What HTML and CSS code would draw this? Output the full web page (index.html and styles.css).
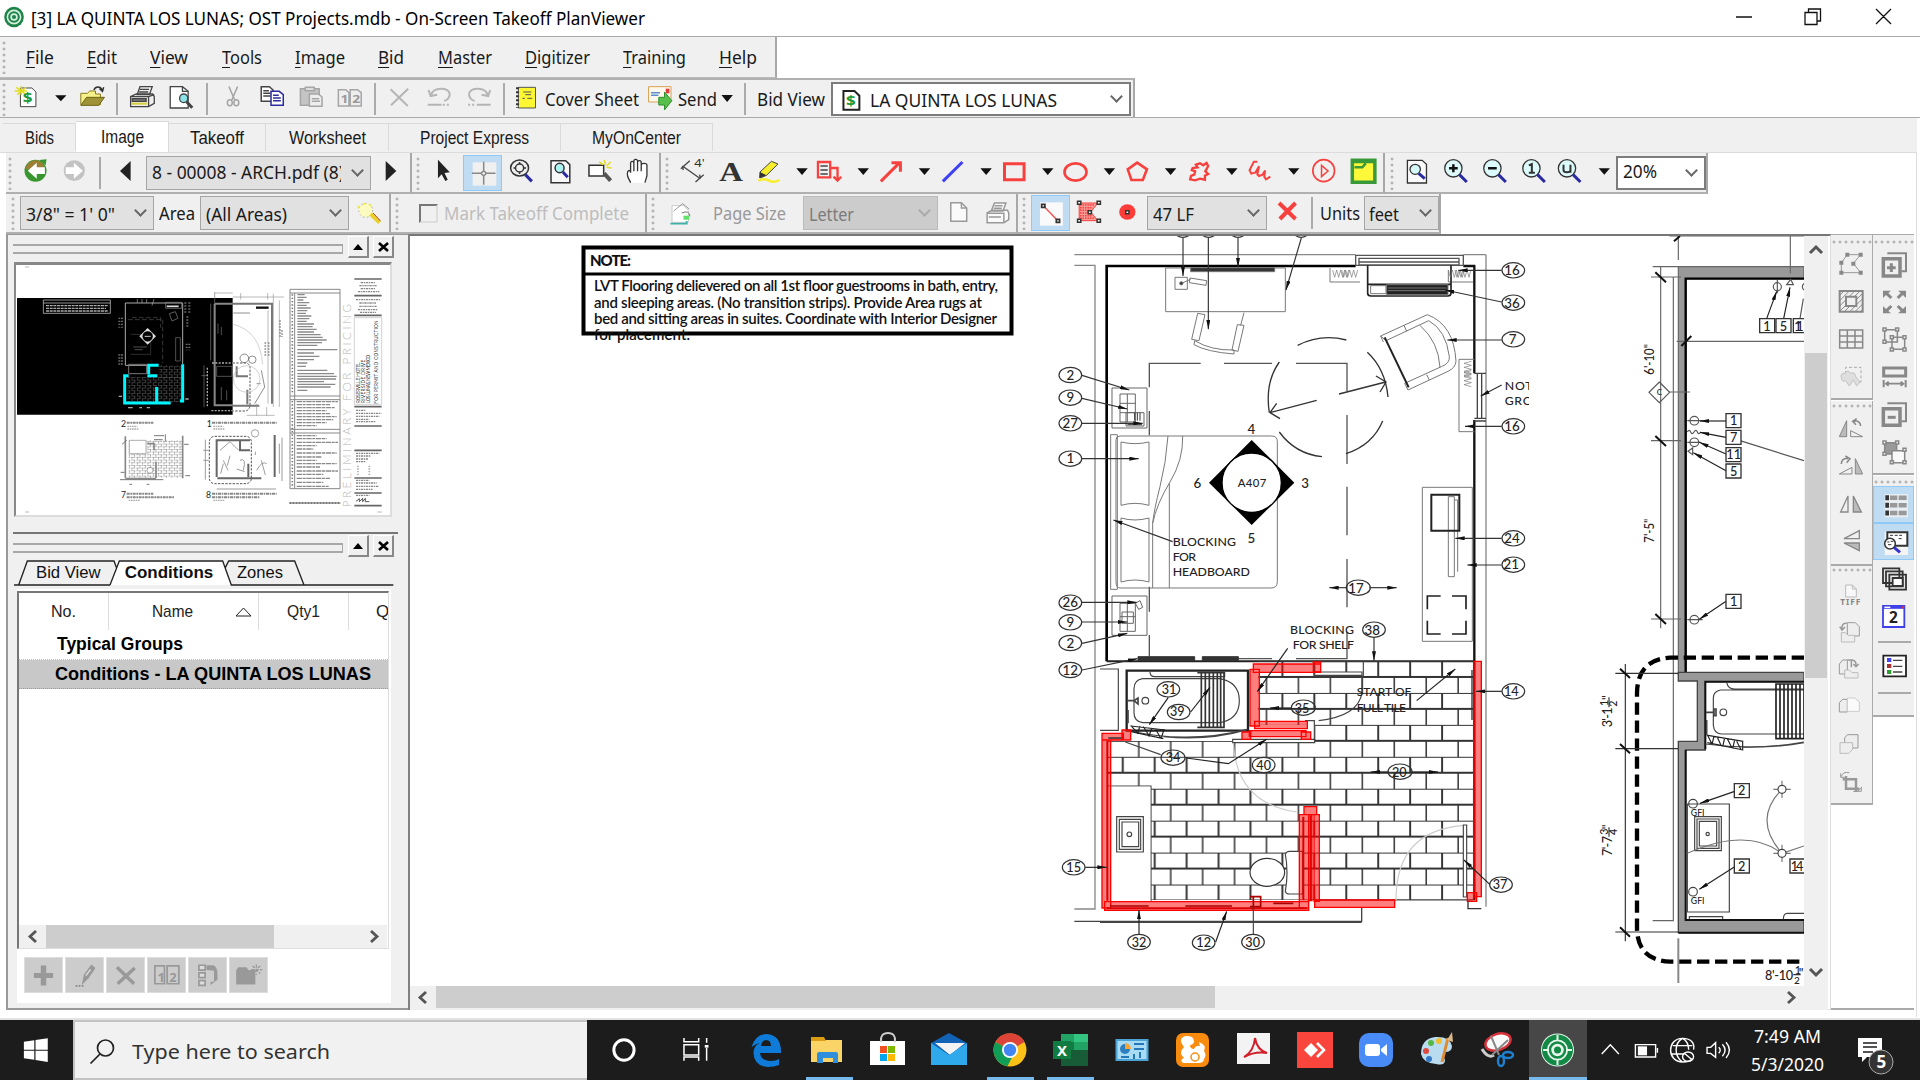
FILE: index.html
```html
<!DOCTYPE html>
<html lang="en">
<head>
<meta charset="utf-8">
<title>On-Screen Takeoff PlanViewer</title>
<link rel="stylesheet" href="styles.css">
</head>
<body>
<div class="app">

<header class="title">
  <svg width="30" height="36" viewBox="0 0 30 36"><ellipse cx="14" cy="17" rx="9.8" ry="10.3" fill="#1d8348"/><circle cx="14" cy="17" r="6.6" fill="none" stroke="#d5f0df" stroke-width="1.6"/><circle cx="14" cy="17" r="2.9" fill="none" stroke="#d5f0df" stroke-width="1.7"/></svg>
  <span class="fit ttl" data-w="614">[3] LA QUINTA LOS LUNAS; OST Projects.mdb - On-Screen Takeoff PlanViewer</span>
  <svg class="winbtns" width="180" height="36" viewBox="1726 0 180 36"><path d="M1736 17h16M1805 12.500h12v12h-12zM1808.500 12v-3h12v12h-3.500M1876 9l15 15M1891 9l-15 15" fill="none" stroke="#111" stroke-width="1.300"/></svg>
</header>

<nav class="menurow"><div class="band menus">
  <i class="grip"></i>
  <span class="fit" data-w="28"><u>F</u>ile</span><span class="fit" data-w="30"><u>E</u>dit</span><span class="fit" data-w="38"><u>V</u>iew</span><span class="fit" data-w="40"><u>T</u>ools</span><span class="fit" data-w="50"><u>I</u>mage</span><span class="fit" data-w="26"><u>B</u>id</span><span class="fit" data-w="54"><u>M</u>aster</span><span class="fit" data-w="65"><u>D</u>igitizer</span><span class="fit" data-w="63"><u>T</u>raining</span><span class="fit" data-w="38"><u>H</u>elp</span>
</div></nav>

<div class="filerow"><div class="band">
  <i class="grip"></i>
  <svg class="k1" width="62" height="39" viewBox="8 79 62 39"><g><path d="M50 264h28l10 12v44H50z" fill="#fff" stroke="#444"/><path d="M52 258v28M40 262l24 22M64 262l-22 22M36 273h30" stroke="#e3dc20" stroke-width="1.500"/><text x="56" y="310" font-size="42" font-weight="700" fill="#1c9a3a">$</text><path d="M135 286h28l-14 18z" fill="#111"/></g></svg>
  <svg class="k1" width="46" height="39" viewBox="70 79 46 39"><g><path d="M198 314V280h16l6-7h14v9h12v32z" fill="#f7f08a" stroke="#8a7d18"/><path d="M198 316l14-24h44l-14 24z" fill="#a09236" stroke="#6d6415"/><path d="M230 270c4-12 16-12 20 0m-6-4l7 8 3-12" fill="none" stroke="#333" stroke-width="1.500"/></g></svg>
  <i class="sep"></i>
  <svg class="k1" width="88" height="39" viewBox="118 79 88 39"><g fill="#eee" stroke="#444" stroke-width="1.300"><path d="M336 284l7-24h30l-7 24zM320 290l14-8h40l4 8v20l-14 10h-44z"/><path d="M320 290h44v28M343 268h22M341 276h22M364 290l14-6M326 304h30" fill="none"/><path d="M324 296h34v8h-34z" fill="#777"/><path d="M322 311h38" stroke="#d6cf3a" stroke-width="2"/><path d="M417 260h30l14 14v50h-44z" fill="#fff"/><path d="M447 260v14h14" fill="none"/><ellipse cx="450" cy="295" rx="10" ry="13" fill="#8ce3ea"/><path d="M457 305l14 18" stroke-width="3"/></g></svg>
  <i class="sep"></i>
  <svg class="k1" width="166" height="39" viewBox="208 79 166 39"><g fill="none" stroke="#a5a5a5" stroke-width="1.500"><path d="M561 260l14 40M582 260l-14 40"/><ellipse cx="563" cy="308" rx="6" ry="9"/><ellipse cx="579" cy="308" rx="6" ry="9"/><g stroke="#444" fill="#fff"><path d="M640 260h20l9 10v34h-29zM645 272h14M645 280h18M645 288h18"/><path d="M664 274h20l10 10v32h-30zM669 286h14M669 294h19M669 302h19" stroke="#2b2ba0"/></g><path d="M736 266h46v50h-46z" fill="#c4c4c4"/><path d="M748 262h22v10h-22z" fill="#ddd"/><path d="M758 282h22l9 9v28h-31z" fill="#eee"/><path d="M764 296h18M764 304h20"/><path d="M829 269h18l8 9v40h-26zM858 269h18l9 9v40h-27z" fill="#eee"/><text x="834" y="310" font-size="34" stroke="none" fill="#999" font-weight="700">1</text><text x="863" y="310" font-size="34" stroke="none" fill="#999" font-weight="700">2</text></g></svg>
  <i class="sep"></i>
  <svg class="k1" width="127" height="39" viewBox="376 79 127 39"><g fill="none" stroke="#b5b5b5" stroke-width="2"><path d="M957 268l42 50M1000 266l-42 50"/><path d="M1056 286c4-26 44-26 46-4 0 12-8 20-14 20M1050 270l5 18 16-4M1048 314h34"/><path d="M1085 314h18" stroke-dasharray="2 2"/><path d="M1195 286c-4-26-44-26-46-4 0 12 8 20 14 20M1201 270l-5 18-16-4M1168 314h34"/><path d="M1147 314h18" stroke-dasharray="2 2"/></g></svg>
  <i class="sep"></i>
  <svg class="k1" width="40" height="39" viewBox="505 79 40 39"><g><path d="M1270 262h42v62h-42z" fill="#fdf733" stroke="#555"/><path d="M1268 262v62" stroke="#333" stroke-width="3" stroke-dasharray="2 2"/><path d="M1282 276h20M1287 284h14M1280 295h6M1292 295h12" stroke="#555"/></g></svg>
  <span class="fit" data-w="94">Cover Sheet</span>
  <svg class="k2" width="38" height="39" viewBox="639 79 38 39"><g><path d="M21 80h55v46H21z" fill="#fdf8ec" stroke="#d6a254"/><path d="M27 98h22M27 106h18" stroke="#5b8fd0" stroke-width="1.500"/><path d="M63 86h9v14h-9z" fill="#e03a3a"/><path d="M46 112h14V96l18 26-18 28v-15H46z" fill="#57bf4c" stroke="#2d8f2b"/></g></svg>
  <span class="fit send" data-w="39">Send</span>
  <svg class="k2" width="26" height="39" viewBox="719 79 26 39"><g><path d="M202 105h28l-14 21z" fill="#111"/></g></svg>
  <i class="sep"></i>
  <span class="fit bidview" data-w="68">Bid View</span>
  <div class="combo w-bid white"><svg class="k2" width="34" height="31" viewBox="835 84 34 31"><g><path d="M496 96h27l12 14v42h-39z" fill="#fff" stroke="#222" stroke-width="2"/><text x="502" y="141" font-size="42" font-weight="700" fill="#1c9a3a">$</text></g></svg><span class="fit" data-w="187">LA QUINTA LOS LUNAS</span><b class="chev"></b></div>
</div></div>

<div class="tabs"><span class="t1"><b class="fit" data-w="29">Bids</b></span><span class="t2 on"><b class="fit" data-w="43">Image</b></span><span class="t3"><b class="fit" data-w="54">Takeoff</b></span><span class="t4"><b class="fit" data-w="77">Worksheet</b></span><span class="t5"><b class="fit" data-w="109">Project Express</b></span><span class="t6"><b class="fit" data-w="89">MyOnCenter</b></span></div>

<div class="toolrow">
 <div class="band first3">
  <i class="grip"></i>
  <svg class="k1" width="85" height="40" viewBox="14 153 85 40"><g><ellipse cx="87" cy="512" rx="27" ry="33" fill="#37962e"/><path d="M62 506c6-28 34-34 46-10v14H76z" fill="#9a7f35"/><path d="M96 480l18-2-2 18z" fill="#37962e"/><path d="M68 512l22-24v14h20v20H90v14z" fill="#fff"/><ellipse cx="182" cy="512" rx="26" ry="31" fill="#c3c3c3"/><path d="M203 512l-22-24v14h-20v20h20v14z" fill="#fff"/></g></svg>
  <i class="sep"></i>
  <svg class="k1" width="45" height="40" viewBox="101 153 45 40"><g><path d="M320 483v60l-26-30z" fill="#222"/></g></svg>
  <div class="combo w-page"><span class="pagename"><span class="fit" data-w="192">8 - 00008 - ARCH.pdf (8)</span></span><b class="chev"></b></div>
  <svg class="k1" width="40" height="40" viewBox="371 153 40 40"><g><path d="M945 483v60l26-30z" fill="#222"/></g></svg>
 </div>
 <div class="band draw3">
  <i class="grip"></i>
  <svg class="k1" width="41" height="40" viewBox="422 153 41 40"><g><path d="M1073 479v56l9-12 9 20 6-4-8-20 13-2z" fill="#222"/></g></svg>
  <svg class="k1 sel" width="39" height="36" viewBox="463 154 39 36"><g><path d="M1158 484h58v70h-58z" fill="#f0f0f0"/><path d="M1185 482v26M1185 525v26M1156 517h22M1192 517h22M1178 517l7-8 7 8-7 8z" fill="none" stroke="#888" stroke-width="1.500"/></g></svg>
  <svg class="k1" width="120" height="40" viewBox="502 153 120 40"><g fill="none" stroke="#333" stroke-width="1.500"><ellipse cx="1273" cy="504" rx="22" ry="24"/><ellipse cx="1273" cy="504" rx="10" ry="12"/><path d="M1258 504h5M1283 504h6M1273 486v6M1273 516v6"/><path d="M1287 524l16 20" stroke="#2b2ba0" stroke-width="3"/><path d="M1350 482h36l10 12v54h-46z" fill="#f8f8f8"/><ellipse cx="1371" cy="504" rx="11" ry="14" fill="#aef2f2"/><path d="M1379 516l12 16" stroke="#2b2ba0" stroke-width="3"/><path d="M1443 496h36v32h-36z" fill="#fff"/><path d="M1480 520l16 22" stroke="#555" stroke-width="4"/><path d="M1480 480l4 14M1496 486l-10 12M1498 504l-12-2M1468 486l10 8" stroke="#e6dc20"/></g></svg>
  <svg class="k1" width="39" height="40" viewBox="622 153 39 40"><g><path d="M1545 548c-4-12-8-14-8-26 0-12 6-14 8-4v-28c0-8 8-8 8 0v-6c0-8 9-8 9 0v4c0-8 9-8 9 0v8c0-8 14-8 14 0v32l-5 20M1553 490v24M1562 486v28M1571 488v26" fill="#fff" stroke="#333" stroke-width="1.300"/></g></svg>
 </div>
 <div class="band shapes3">
  <i class="grip"></i>
  <svg class="k2" width="80" height="40" viewBox="671 153 80 40"><g><path d="M104 318l44 38M100 326l22-24M136 366l20-22M104 318l2 12M148 356l-2-12" fill="none" stroke="#444" stroke-width="1.300"/><text x="133" y="322" font-size="32" fill="#333">4'</text><text x="194" y="362" class="srf" font-size="84" textLength="58" lengthAdjust="spacingAndGlyphs">A</text></g></svg>
  <svg class="k2" width="61" height="40" viewBox="751 153 61 40"><g><path d="M294 336l28-32 16 8-28 34-16 8z" fill="#f7ee2c" stroke="#444"/><path d="M294 336l16 10-18 8z" fill="#333"/><path d="M290 362q14-8 26 0t26-2" fill="none" stroke="#f7ee2c" stroke-width="2.500"/><path d="M383 325h28l-14 20z" fill="#111"/></g></svg>
  <svg class="k2" width="62" height="40" viewBox="812 153 62 40"><g fill="none" stroke="#f7413e" stroke-width="2.300"><path d="M436 306h30v46h-30z"/><path d="M442 318h18M442 330h18M442 342h18" stroke="#444" stroke-width="1.500"/><path d="M466 324h18v34M474 350l10 12 9-12"/><path d="M533 325h28l-14 20z" fill="#111" stroke="none"/></g></svg>
  <svg class="k2" width="61" height="40" viewBox="874 153 61 40"><g><path d="M590 364l46-56M616 308h22v27" fill="none" stroke="#f7413e" stroke-width="3"/><path d="M683 325h28l-14 20z" fill="#111"/></g></svg>
  <svg class="k2" width="62" height="40" viewBox="935 153 62 40"><g><path d="M742 364l48-58" stroke="#3f3ff5" stroke-width="3"/><path d="M834 325h28l-14 20z" fill="#111"/></g></svg>
  <svg class="k2" width="61" height="40" viewBox="997 153 61 40"><g><path d="M893 311h48v48h-48z" fill="none" stroke="#f7413e" stroke-width="3"/><path d="M985 325h28l-14 20z" fill="#111"/></g></svg>
  <svg class="k2" width="62" height="40" viewBox="1058 153 62 40"><g><ellipse cx="1067" cy="336" rx="27" ry="26" fill="none" stroke="#f7413e" stroke-width="2.600"/><path d="M1136 325h28l-14 20z" fill="#111"/></g></svg>
  <svg class="k2" width="61" height="40" viewBox="1120 153 61 40"><g><path d="M1218 308l24 20-10 32h-28l-9-32z" fill="none" stroke="#f7413e" stroke-width="2.600"/><path d="M1286 325h28l-14 20z" fill="#111"/></g></svg>
  <svg class="k2" width="61" height="40" viewBox="1181 153 61 40"><g><path d="M1366 322l-4-8 10-4 8 6 8-7 4 9-7 16 7 8-8 5v12l-12-3-12 5-12-3 2-10 8-4 2-10-8-4 2-6z" fill="none" stroke="#f7413e" stroke-width="2.400"/><path d="M1436 325h28l-14 20z" fill="#111"/></g></svg>
  <svg class="k3" width="62" height="40" viewBox="1242 153 62 40"><g><path d="M40 95l-8 0-10 26 4 10 10-4 8-18-4 24 4 5 8-4 6-12-2 18 4 8 10-8" fill="none" stroke="#f7413e" stroke-width="2"/><path d="M111 115h26l-13 19z" fill="#111"/></g></svg>
  <svg class="k3" width="80" height="40" viewBox="1304 153 80 40"><g><ellipse cx="193" cy="122" rx="25" ry="33" fill="none" stroke="#f7413e" stroke-width="1.700"/><path d="M188 106v34l15-17z" fill="none" stroke="#f7413e" stroke-width="1.500"/><path d="M259 91h52v66h-52z" fill="#fdf93a" stroke="#3a9a3a" stroke-width="3.500"/><path d="M259 96h52M290 100l-8 12h-18" fill="none" stroke="#3a9a3a" stroke-width="2.500"/></g></svg>
 </div>
 <div class="band zoom3">
  <i class="grip"></i>
  <svg class="k3" width="220" height="40" viewBox="1396 153 220 40"><g fill="none" stroke="#333" stroke-width="1.300"><path d="M386 91h34l10 12v56h-44z" fill="#fafafa"/><ellipse cx="404" cy="118" rx="12" ry="15" fill="#d5fafa"/><path d="M412 130l14 16" stroke="#2b2ba0" stroke-width="3"/><g fill="#dcfafa"><ellipse cx="492" cy="115" rx="20" ry="26"/><ellipse cx="582" cy="115" rx="20" ry="26"/><ellipse cx="672" cy="115" rx="20" ry="26"/><ellipse cx="754" cy="115" rx="20" ry="26"/></g><path d="M506 134l17 22M596 134l17 22M686 134l17 22M768 134l17 22" stroke="#2b2ba0" stroke-width="3"/><path d="M482 115h20M492 103v24M572 115h20" stroke="#111" stroke-width="2.500"/><path d="M666 106l7-4v26M666 128h14M746 104v17q0 6 8 6t8-6v-17M762 120v8" stroke-width="2"/><path d="M827 115h26l-13 19z" fill="#111" stroke="none"/></g></svg>
  <div class="combo w-zoom white"><span class="fit" data-w="34">20%</span><b class="chev"></b></div>
 </div>
</div>

<div class="toolrow row4">
 <div class="band scale4">
  <i class="grip"></i>
  <div class="combo w-scale"><span class="fit" data-w="89">3/8" = 1' 0"</span><b class="chev"></b></div>
  <span class="fit area" data-w="36">Area</span>
  <div class="combo w-area"><span class="fit" data-w="81">(All Areas)</span><b class="chev"></b></div>
  <svg class="k1" width="40" height="39" viewBox="349 195 40 39"><g><ellipse cx="896" cy="634" rx="17" ry="21" fill="#fdfbc0" stroke="#aaa" stroke-dasharray="1.500 2.500"/><path d="M908 645l22 26" stroke="#e8d22a" stroke-width="4"/><path d="M914 642l18 24" stroke="#d0401f" stroke-width="1"/><path d="M878 620v8M892 612v6M908 616v6" stroke="#f2ea50" stroke-width="2"/></g></svg>
 </div>
 <div class="band mark4"><i class="grip"></i><i class="check"></i><span class="fit dim" data-w="185">Mark Takeoff Complete</span></div>
 <div class="band page4"><i class="grip"></i>
  <svg class="k2" width="56" height="39" viewBox="656 195 56 39"><g><path d="M76 440h28l12 14v36H76z" fill="#fff" stroke="#ccc"/><path d="M80 456l22-22 16 16" fill="none" stroke="#999"/><path d="M72 494h40v-8" fill="none" stroke="#3fb0a8" stroke-width="1.800"/><path d="M104 470h14v12h-14z" fill="#5fe06a"/><path d="M100 462q18-10 20 10" fill="none" stroke="#777"/></g></svg>
  <span class="fit dim" data-w="73">Page Size</span>
  <div class="combo w-letter off"><span class="fit" data-w="45">Letter</span><b class="chev"></b></div>
  <svg class="k2" width="80" height="39" viewBox="937 195 80 39"><g fill="#fafafa" stroke="#999" stroke-width="1.500"><path d="M759 431h26l13 16v40h-39z"/><path d="M785 431v16h13" fill="none"/><path d="M858 456l8-24h28l-7 24zM848 462l12-8h38l3 8v20l-12 9h-41z"/><path d="M848 463h41v27M866 440h20M864 448h20M852 474h30" fill="none"/></g></svg>
 </div>
 <div class="band cond4"><i class="grip"></i>
  <svg class="k2 sel" width="39" height="36" viewBox="1031 196 39 36"><g><path d="M980 430h56v70h-56z" fill="#fafafa"/><path d="M988 440l36 46" stroke="#f7413e" stroke-width="1.300"/><path d="M984 436h8v9h-8zM1020 481h8v9h-8z" fill="#fff" stroke="#333" stroke-width="1.700"/></g></svg>
  <svg class="k2" width="77" height="39" viewBox="1070 195 77 39"><g><path d="M1076 432h46l-18 27 18 26h-46z" fill="#f99a96" stroke="#f7413e"/><path d="M1078 438h34M1078 446h28M1078 454h24M1078 462h24M1078 470h28M1078 478h34" stroke="#f7413e" stroke-width="1.500" stroke-dasharray="1.500 1"/><path d="M1072 427h8v9h-8zM1120 427h8v9h-8zM1072 481h8v9h-8zM1120 481h8v9h-8zM1098 455h8v9h-8z" fill="#fff" stroke="#333" stroke-width="1.500"/><ellipse cx="1194" cy="459" rx="20" ry="23" fill="#fd3d3a"/><path d="M1190 455h8v9h-8z" fill="#fff" stroke="#333" stroke-width="1.500"/></g></svg>
  <div class="combo w-lf"><span class="fit" data-w="41">47 LF</span><b class="chev"></b></div>
  <svg class="k3" width="44" height="39" viewBox="1267 195 44 39"><g><path d="M90 222l38 48M128 222l-36 48" stroke="#f7413e" stroke-width="4"/></g></svg>
  <i class="sep"></i>
  <span class="fit units" data-w="40">Units</span>
  <div class="combo w-feet"><span class="fit" data-w="30">feet</span><b class="chev"></b></div>
 </div>
</div>

<main class="work">
 <aside class="dock">
  <div class="cap"><i></i><b><svg width="10" height="6" viewBox="0 0 10 6"><path d="M0 6l5-6 5 6z"/></svg></b><b><svg width="11" height="10" viewBox="0 0 11 10"><path d="M1 1l9 8M10 1L1 9" stroke="#000" stroke-width="2.600"/></svg></b></div>
  <div class="thumb">
   <svg width="372" height="249" viewBox="51 104 1116 747">
    <g fill="none">
     <path d="M51 203h647v350H51z" fill="#000"/>
     <path d="M75 110h12M75 845h12M1132 845h14" stroke="#bbb" stroke-width="3"/>
     <g stroke="#ddd" stroke-width="2"><path d="M130 209h201v40H130zM130 218h201"/><path d="M138 226h185M138 234h180M138 242h186" stroke="#aaa" stroke-width="4" stroke-dasharray="9 2"/><path d="M376 405V218h172v184M376 405h66" stroke="#aaa" stroke-width="3"/><path d="M412 206v12M426 206v12M440 206v12M462 206l-6 20" stroke="#aaa"/><path d="M497 216h48v18h-48z" stroke="#888"/><path d="M500 228h36" stroke-width="5"/><path d="M508 250l18-6 8 20-18 8z" stroke="#888"/><path d="M384 268h98M488 268v130M396 262l86 0v30" stroke="#555" stroke-dasharray="14 7"/><path d="M392 312h60v60h-60" stroke="#444"/><path d="M400 350h40M404 358h24" stroke="#777"/><path d="M527 322h14v70h-14z" stroke="#777"/><path d="M358 262v30M366 262v30M358 372v36M366 372v36M556 216v34M568 216v34M562 258v34M560 340v20M568 340v20" stroke="#666" stroke-width="6" stroke-dasharray="4 5"/></g>
     <path d="M443 293l25 25-25 25-25-25z" fill="#ddd"/><circle cx="443" cy="318" r="16" fill="#000" stroke="#ddd"/><path d="M434 318h18" stroke="#ccc" stroke-width="3"/>
     <path d="M386 402h54v28h-54z" stroke="#777" stroke-width="3"/>
     <path d="M382 440h164v76H382z" fill="url(#tdark)"/><path d="M478 405h68v40h-68z" fill="url(#tdark)"/>
     <path d="M374 521V436h12M370 518h142M442 436h30M476 405h-30v26M470 470v48M548 402v113M540 512h12" stroke="#00f6ff" stroke-width="9"/>
     <path d="M384 532h14M418 532h8M440 532h10M356 498h10M556 506h10" stroke="#aaa" stroke-width="4"/>
     <g stroke="#aaa" stroke-width="3"><path d="M644 220v305h54M644 220h54" stroke-width="6" stroke="#888"/><path d="M632 220v170M644 186v34M612 405v126M604 436h20M650 408h46v30h-46zM664 470v40M680 480v30M654 280v30M664 290v24" stroke="#777" stroke-width="2"/><path d="M636 398h62M622 412v116M634 541h64" stroke-width="4" stroke-dasharray="6 4"/></g>
     <g stroke="#555" stroke-width="3"><path d="M698 220h118v300M698 526h80M710 408v30h34M742 478v44" stroke-width="6" stroke="#777"/><path d="M698 398h40q12 2 12 14v114q-2 14-14 16h-38" stroke-dasharray="7 4"/><path d="M642 188h56M698 200h154M722 188v20M803 188v20M820 190v340M838 210v320M804 240v280M740 555h84M770 520v36M800 530v26" stroke="#999" stroke-width="2"/><path d="M768 232h38" stroke="#111" stroke-width="7"/><path d="M700 248h50M784 420l10 50-30 50M782 460h-12" stroke-width="2"/><circle cx="733" cy="384" r="13" stroke-width="2"/><circle cx="757" cy="388" r="11" stroke-width="2"/><circle cx="740" cy="446" r="40" stroke="#bbb" stroke-width="2"/><path d="M700 282q80 20 88 120" stroke="#bbb" stroke-width="2"/><path d="M796 336v40M806 336v40M840 270v50M846 300v20" stroke="#888" stroke-width="5" stroke-dasharray="4 5"/></g>
     <g fill="#222" font-size="26"><text x="363" y="589">2</text><text x="620" y="589">1</text><text x="363" y="802">7</text><text x="618" y="802">8</text></g>
     <path d="M380 577h80M636 577h194M380 790h80M636 790h194M380 801h142M636 801h142" stroke="#888" stroke-width="6" stroke-dasharray="9 2 5 2"/><path d="M382 588h30M640 588h30M382 596h34M640 596h34M386 810h34M640 810h34" stroke="#aaa" stroke-width="4" stroke-dasharray="5 2"/>
     <path d="M386 630h160v112H386z" fill="url(#tlite)"/><path d="M388 630h50v40h-50z" fill="#fff" stroke="#888" stroke-width="2"/><path d="M376 618v124M376 745h92M468 695v48M548 616v128M442 640h20v20" stroke="#888" stroke-width="5"/><path d="M366 642l14-12M496 612v20M362 726h12M388 762h8M440 762h8M360 748h130M566 642h-14M570 736h-14M462 616h30M462 628h26" stroke="#777" stroke-width="3"/><circle cx="450" cy="720" r="9" fill="#fff" stroke="#777" stroke-width="2"/>
     <path d="M650 740V630h100M720 632v28h30M652 744h132M745 700v40M824 614v126" stroke="#666" stroke-width="6"/><rect x="628" y="618" width="126" height="142" rx="16" stroke="#555" stroke-width="3" stroke-dasharray="7 4"/><path d="M616 628v120M610 660h16M610 690h16M846 622v130M650 776h178M670 690l14 30M690 676l-8 30M720 690q20-10 10 30M710 716l24 8M670 700l-8 30M784 690l12 44M770 720q16-30 30-20M766 664v10M660 660l30-26 26 26M838 640v90" stroke="#888" stroke-width="2.500"/><circle cx="765" cy="609" r="11" stroke="#777" stroke-width="2"/>
     <path d="M870 177h150v598H870zM870 188h150M870 497h150M870 508h150M870 597h150M870 608h150M884 188v587" stroke="#888" stroke-width="3"/>
     <g stroke="#8a8a8a" stroke-width="4"><path d="M892 193h22M892 201h28M892 209h18M892 217h36M892 225h28M892 233h40M892 241h30M892 249h26M892 257h42M892 265h36M892 273h28M892 281h50M892 289h46M892 297h58M892 305h50M892 313h70M892 321h76M892 329h88M892 337h74M892 345h60M892 358h120M892 368h50M892 378h66M892 388h50M892 398h30M892 408h26M892 420h90M892 430h110M892 438h118M892 446h116M892 454h80M892 462h114M892 470h100M892 480h30"/><path d="M890 514h124M890 523h100M890 532h116M890 541h90M890 550h100M890 559h120M890 568h110M890 577h90M890 586h60M890 616h60M890 625h90M890 636h124M890 646h60M890 656h50M890 668h120M890 680h74M890 690h60M890 700h120M890 710h70M890 722h124M890 732h80M890 744h100M890 756h80M890 768h96" stroke-dasharray="16 2 9 2"/></g>
     <path d="M877 192v300M877 512v260" stroke="#777" stroke-width="5" stroke-dasharray="4 6"/>
     <path d="M868 818h154" stroke="#777" stroke-width="6" stroke-dasharray="7 2"/>
     <g font-size="35" fill="#b5b5b5" font-weight="300"><text transform="translate(1053 831) rotate(-90)" textLength="610">PRELIMINARY FOR PRICING</text></g>
     <path d="M1063 146h82M1063 196h82M1063 255h82M1063 529h82M1063 587h82M1063 660h82M1063 743h82M1063 788h82M1063 826h82" stroke="#666" stroke-width="5"/><path d="M1063 262h82v260h-82z" stroke="#bbb" stroke-width="2"/>
     <g font-size="14" fill="#222"><text transform="translate(1080 518) rotate(-90)" textLength="122">ROSERVILLE HOTEL</text><text transform="translate(1095 518) rotate(-90)" textLength="130">RIVERSIDE DRIVE</text><text transform="translate(1110 518) rotate(-90)" textLength="145">LOS LUNAS, NEW MEXICO</text><text transform="translate(1133 520) rotate(-90)" textLength="250">FOR PERMIT AND CONSTRUCTION</text></g>
     <path d="M1082 157h44M1078 166h52M1082 175h44M1074 184h64M1068 208h72M1078 218h50M1078 228h54M1074 238h60M1080 246h48M1068 540h30M1068 549h76M1068 558h70M1068 567h40M1068 574h58M1068 669h70M1068 677h44M1068 686h36M1068 694h30M1068 750h40M1068 758h62M1068 768h68M1068 777h50M1068 795h40" stroke="#888" stroke-width="4" stroke-dasharray="7 2 4 2"/><path d="M1068 813l10-8v9l10-10v10l8-10v10h12" stroke="#333" stroke-width="2.500"/><path d="M1074 706v30M1108 706v30" stroke="#aaa" stroke-width="5" stroke-dasharray="4 4"/>
    </g>
    <defs><pattern id="tdark" width="16" height="16" patternUnits="userSpaceOnUse"><path d="M0 1h16M0 9h16M4 1v8M12 9v7" stroke="#555" stroke-width="2" stroke-dasharray="7 3"/></pattern><pattern id="tlite" width="16" height="16" patternUnits="userSpaceOnUse"><path d="M0 1h16M0 9h16M4 1v8M12 9v7" stroke="#888" stroke-width="2" stroke-dasharray="6 3"/></pattern></defs>
   </svg>
  </div>
  <div class="cap second"><i></i><b><svg width="10" height="6" viewBox="0 0 10 6"><path d="M0 6l5-6 5 6z"/></svg></b><b><svg width="11" height="10" viewBox="0 0 11 10"><path d="M1 1l9 8M10 1L1 9" stroke="#000" stroke-width="2.600"/></svg></b></div>
  <svg class="slant" width="380" height="27" viewBox="42 102 1140 81"><path d="M112 180h216l24-72h316l26 72z" fill="#fff"/><g fill="none" stroke="#222" stroke-width="4"><path d="M42 180h14l26-72h260l8 22M330 180h-274M330 180l28-72h310l26 72h486M676 128l10-20h198l28 72"/></g><g class="arial" font-size="49"><text x="108" y="160" textLength="194" lengthAdjust="spacingAndGlyphs">Bid View</text><text x="374" y="160" textLength="266" lengthAdjust="spacingAndGlyphs" font-weight="700">Conditions</text><text x="711" y="160" textLength="138" lengthAdjust="spacingAndGlyphs">Zones</text></g></svg>
  <div class="condbox">
   <div class="list">
    <div class="lhead"><span class="h1"><em class="fit" data-w="25">No.</em></span><span class="h2"><em class="fit" data-w="41">Name</em><svg width="17" height="10" viewBox="0 0 17 10"><path d="M1 9l7.500-8 7.500 8z" fill="none" stroke="#222"/></svg></span><span class="h3"><em class="fit" data-w="33">Qty1</em></span><span class="h4">Q</span></div>
    <div class="lrow g1"><b class="fit" data-w="126">Typical Groups</b></div>
    <div class="lrow g2"><b class="fit" data-w="316">Conditions - LA QUINTA LOS LUNAS</b></div>
    <div class="hscroll small"><svg width="27" height="23" viewBox="0 0 27 23"><path d="M17 6l-6 5.500 6 5.500" fill="none" stroke="#555" stroke-width="2.800"/></svg><i></i><svg width="27" height="23" viewBox="0 0 27 23"><path d="M11 6l6 5.500-6 5.500" fill="none" stroke="#555" stroke-width="2.800"/></svg></div>
   </div>
   <div class="cbtns">
    <svg viewBox="77 1299 108 99"><path d="M103 1343h20v-22h16v22h20v14h-20v22h-16v-22h-20z" fill="#999"/></svg>
    <svg viewBox="198 1299 108 99"><path d="M244 1378l6-30 22-30 12 10-20 30z" fill="#999"/><path d="M256 1350l14-18" stroke="#ddd" stroke-width="4"/><path d="M226 1380h24" stroke="#888" stroke-width="5" stroke-dasharray="5 4"/></svg>
    <svg viewBox="319 1299 108 99"><path d="M348 1326l50 48M400 1328l-50 46" stroke="#999" stroke-width="10"/></svg>
    <svg class="wide" viewBox="444 1299 108 99"><path d="M464 1322h28v52h-28zM500 1322h34v52h-34z" fill="#ccc" stroke="#999" stroke-width="5"/><text x="472" y="1368" font-size="38" font-weight="700" fill="#999">1</text><text x="506" y="1368" font-size="38" font-weight="700" fill="#999">2</text></svg>
    <svg viewBox="567 1299 108 99"><path d="M596 1320h18v14h-18zM596 1342h18v14h-18zM596 1365h18v14h-18z" fill="#ddd" stroke="#999" stroke-width="5"/><path d="M618 1320h20q12 6 12 24v18l-20 16v-10h10v-32l-22-2z" fill="#999"/></svg>
    <svg viewBox="688 1299 108 99"><path d="M706 1376v-42l6-8h24l6 8h20v42z" fill="#999"/><path d="M765 1318v30M750 1333h32M754 1322l22 22M776 1322l-22 22" stroke="#999" stroke-width="4" stroke-dasharray="9 4"/></svg>
   </div>
  </div>
 </aside>

 <section class="view">
  <svg class="plan" width="1394" height="750" viewBox="410 236 1394 750">
   <defs>
    <clipPath id="cp"><path d="M410 236h1119v750H410z"/></clipPath>
    <pattern id="tile" x="727" y="33" width="95.800" height="95.800" patternUnits="userSpaceOnUse"><path d="M0 0h96M0 48h96" stroke="#333" stroke-width="5.500"/><path d="M1 0v48M48.500 48v48M95.500 0v48" stroke="#333" stroke-width="4.500"/></pattern>
    <ellipse id="b" rx="34" ry="23" fill="#fff" stroke="#333" stroke-width="3.500"/>
    <ellipse id="bo" rx="36" ry="23" fill="none" stroke="#333" stroke-width="3.500"/>
    <path id="q" d="M0 0h45v42H0z" fill="#fff" stroke="#333" stroke-width="4"/>
    <marker id="a" viewBox="0 0 28 12" refX="28" refY="6" markerWidth="28" markerHeight="12" markerUnits="userSpaceOnUse" orient="auto"><path d="M0 0l28 6-28 6z" fill="#111"/></marker>
    <path id="z" d="M0 0l6 22 6-22 6 22 6-22 6 22 6-22 6 22 6-22" fill="none" stroke="#777" stroke-width="2"/>
   </defs>
   <g fill="none" stroke="#000" stroke-width="4"><path d="M583.500 247.500h428v86h-428z"/><path d="M583 274h428" stroke-width="3"/></g>
   <g class="lato" font-size="15" fill="#111" font-weight="600"><text x="590" y="266" textLength="41" font-weight="900">NOTE:</text><text x="594" y="291" textLength="404">LVT Flooring delievered on all 1st floor guestrooms in bath, entry,</text><text x="594" y="307.500" textLength="388">and sleeping areas. (No transition strips). Provide Area rugs at</text><text x="594" y="323.500" textLength="403">bed and sitting areas in suites. Coordinate with Interior Designer</text><text x="594" y="339.500" textLength="96">for placement.</text></g>

   <g clip-path="url(#cp)">
   <!-- guestroom -->
   <g transform="translate(1040 230) scale(.33333)" fill="none" stroke="#777" stroke-width="3">
    <path d="M103 74H947M103 106H165V2037H103M1338 74V2030M1270 74h68" stroke="#888" stroke-width="4"/>
    <path d="M200 1294V108H947" stroke="#000" stroke-width="8"/><path d="M200 1294H1305" stroke="#222" stroke-width="6"/>
    <path d="M1303 106V430M1303 570V2010M1270 108h36" stroke="#111" stroke-width="7"/>
    <path d="M1303 430h35M1303 565h35M1303 573h35M1312 430v135M1325 430v135M103 2074H965V2034M180 2077h785" stroke="#444" stroke-width="4"/>
    <path d="M947 76h323v30H947zM957 85h300v20H957zM957 96h300" stroke="#555" stroke-width="4"/>
    <path d="M377 114h359v131H377zM405 142h37v36h-37zM450 144l50 8-2 14-50-8zM424 160l28-12M870 114v42h90M1225 120v36h74M1257 388v217h46M1257 388h46"/><path d="M452 113h252v12H452z" fill="#333"/><circle cx="424" cy="160" r="5" fill="#333"/>
    <path d="M983 106v84q0 8 10 8h230q10 0 10-8v-84M983 163h250" stroke="#222" stroke-width="5"/><path d="M1040 164h184v30h-184z" fill="#222"/><path d="M992 167h46v24h-46zM1044 174h176M1044 182h176" stroke="#777"/>
    <use href="#z" x="878" y="120"/><use href="#z" x="905" y="120"/><use href="#z" x="1225" y="120"/><use href="#z" x="1245" y="120"/><g transform="translate(1294 394) rotate(90)"><use href="#z"/><use href="#z" x="28"/></g>
    <path d="M473 250l-18 78 22 4 18-78zM592 284l-16 76 18 4 18-78zM612 248l-10 38M464 332q50 30 118 28v12q-80-6-120-28z"/>
    <path d="M1022 318l140-64q80 30 86 140-2 20-24 30l-120 56-10-20 110-50q26-10 24-30-10-80-62-108l-128 60zM1140 286q56 50 60 126M1092 286l8 18M1160 434l8 16M1022 318l8 18"/><path d="M1034 322l72 150" stroke="#222" stroke-width="6"/>
    <path d="M328 472V400H482M552 400H696M768 400H921V484M921 555V702M921 770v146M921 987v145M921 1205v80M328 543V616M328 1070v75M328 1215v65M500 1286h196M768 1286h155" stroke="#555" stroke-width="4"/>
    <path d="M773 346q70-36 146-16M982 367q54 50 62 134M1028 573q-30 72-110 98M846 680q-80-8-128-74M688 548q-14-90 30-152" stroke="#333" stroke-width="4"/>
    <path d="M897 492l140-36M1008 438l30 18-18 30M830 511l-140 37M710 520l-20 28 30 18" stroke="#333" stroke-width="4"/>
    <path d="M216 474h105v120H216zM240 492h46v84h-46zM240 520h46M240 548h46M262 492v84M258 548h54v40h-54zM216 1098h105v118H216zM240 1120h46v84h-46zM240 1160h46M262 1120v84M246 1146h34v34h-34zM286 1120l14-8 8 20-12 6z" stroke="#666"/><path d="M284 548v24M292 548v24M300 548v24M262 584h44" stroke="#333"/>
    <path d="M212 614v464h20V614zM228 1054V630q0-12 12-12h455q17 0 17 17V1055q0 19-19 19H240q-12 0-12-20zM243 636v190q42-12 84 0V636q-42 10-84 0zM243 864v192q42-12 84 0V864q-42 12-84 0zM338 1074V880M388 1074V760M384 618Q378 700 360 770T338 880M428 618Q430 690 390 756T338 880"/>
    <path d="M1147 772h150v462h-150zM1225 800h18v240h-18zM1243 810h10v215"/><path d="M1174 794h84v108h-84z" stroke="#222" stroke-width="6"/><path d="M1162 1138v-40h40M1236 1098h42v40M1278 1172v40h-42M1202 1212h-40v-40" stroke="#222" stroke-width="5"/>
    <path d="M294 1280h170v12H294zM487 1280h108v12H487z" fill="#333" stroke="#333"/>
    <path d="M635 630L763 758 635 885 507 758z" fill="#000" stroke="none"/><circle cx="635" cy="758" r="89" fill="#fff" stroke="#000" stroke-width="4"/>
    <g stroke="#333" stroke-width="3.500"><path d="M402 10q26 24 54 0M480 10q26 24 52 0M568 10q26 24 52 0M758 10q26 24 50 0" /><g marker-end="url(#a)"><path d="M429 24V138"/><path d="M505 24V298"/><path d="M594 24V112"/><path d="M784 24L738 180"/><path d="M1385 121H1255"/><path d="M1385 216L1215 180"/><path d="M1385 330H1222"/><path d="M1385 465L1322 498"/><path d="M1385 589H1275"/><path d="M126 436L268 480"/><path d="M126 505L262 537"/><path d="M126 580H308"/><path d="M126 686H296"/><path d="M398 935L220 870"/><path d="M1385 925H1246"/><path d="M1385 1005H1282"/><path d="M921 1073H868"/><path d="M988 1073H1070"/><path d="M126 1117H290"/><path d="M126 1176H262"/><path d="M126 1240L262 1210"/><path d="M126 1320L292 1286"/><path d="M1002 1218V1292"/></g></g>
    <g><use href="#b" x="1420" y="121"/><use href="#b" x="1420" y="218"/><use href="#b" x="1420" y="328"/><use href="#b" x="1420" y="589"/><use href="#b" x="91" y="435"/><use href="#b" x="91" y="503"/><use href="#b" x="91" y="580"/><use href="#b" x="91" y="686"/><use href="#b" x="1420" y="925"/><use href="#b" x="1420" y="1004"/><use href="#bo" x="955" y="1073"/><use href="#b" x="91" y="1118"/><use href="#b" x="91" y="1177"/><use href="#b" x="91" y="1239"/><use href="#b" x="91" y="1320"/><use href="#b" x="1002" y="1199"/></g>
    <g class="lato num" font-size="40"><text x="1416" y="136">16</text><text x="1416" y="233">36</text><text x="1418" y="342">7</text><text x="1416" y="603">16</text><text x="91" y="450">2</text><text x="91" y="517">9</text><text x="91" y="594">27</text><text x="91" y="700">1</text><text x="1416" y="939">24</text><text x="1414" y="1018">21</text><text x="948" y="1088">17</text><text x="91" y="1132">26</text><text x="91" y="1191">9</text><text x="91" y="1254">2</text><text x="91" y="1335">12</text><text x="997" y="1214">38</text><text x="634" y="612">4</text><text x="472" y="775">6</text><text x="795" y="775">3</text><text x="634" y="938">5</text></g>
    <g class="lato num lft" font-size="37"><text x="593" y="770" textLength="86" font-size="34">A407</text><text x="398" y="949" textLength="190">BLOCKING</text><text x="398" y="994" textLength="70">FOR</text><text x="398" y="1039" textLength="232">HEADBOARD</text><text x="750" y="1213" textLength="192">BLOCKING</text><text x="758" y="1258" textLength="184">FOR SHELF</text><text x="1394" y="480" textLength="84">NOT</text><text x="1394" y="525" textLength="84">GRO</text></g>
   </g>
   <!-- bath and entry -->
   <g transform="translate(1040 650) scale(.33333)" fill="none" stroke="#444" stroke-width="3.500">
    <path d="M655 33H1300V750H333V408H204V273H823V225H655z" fill="url(#tile)" stroke="none"/>
    <path d="M180 57h55v184h-55M204 408h129v344M822 750H1300M820 33h150v45H824zM966 78v50q-10 70-130 84" stroke="#444"/><path d="M824 66h142v10H824z" fill="#fff"/><path d="M578 268h246v10H578zM795 212h28v60" fill="#fff"/>
    <path d="M204 410h127v342H204z" fill="#fff" stroke="none"/><path d="M230 500h80v106h-80zM246 516h50v74h-50zM238 508h64v90h-64z"/><circle cx="268" cy="553" r="7"/>
    <path d="M580 280q10 180 190 206M1068 750q0-210 206-224" stroke="#ccc"/><path d="M1270 525h10v216h-10z" fill="#fff"/>
    <ellipse cx="682" cy="667" rx="52" ry="42" fill="#fff" stroke="#333"/><path d="M736 612q4-8 12-8h40v128h-40q-10 0-12-8 10-56 0-112z" fill="#fff"/>
    <path d="M260 62h364v180H260z" fill="#fff" stroke="#222" stroke-width="7"/><path d="M330 66q0 14 14 14h210V66M308 86h230q60 10 60 66t-60 66H308q-26-4-26-30v-72q0-26 26-30z"/><path d="M472 68h80v164h-80M484 68v164M496 68v164M508 68v164M520 68v164M532 68v164M542 68v164" stroke="#333" stroke-width="5"/><circle cx="316" cy="152" r="10"/><path d="M262 152h20l12-8v18l-12-10M264 180v40" stroke-width="5"/>
    <path d="M260 240q180 44 362-2M370 260q130 14 250-20" /><path d="M272 226l20 22M300 228l-8 24M310 230l18 28M336 234l-10 26M346 236l16 28M372 238l-8 26M270 244l100 22M272 228l104 12" stroke="#222"/>
    <g fill="none" stroke="red" stroke-width="4"><g fill="#ff0000" fill-opacity=".5"><path d="M640 42h202v25H640zM820 36h22v30h-22zM630 58h28v170h-28zM644 214h158v22H644zM606 246h26v22h-26zM628 242h170v18H628zM784 246h28v22h-28zM186 250h64v20h-64zM246 240h26v30h-26zM186 270h26v504h-26zM194 755h612v26H194zM778 494h28v280h-28zM806 494h10v258h-10zM822 494h16v260h-16zM792 470h38v24h-38zM824 750h240v22H824zM1302 34h22v706h-22zM1282 728h28v26h-28z"/></g><path d="M202 272v480M200 775h600M790 500v250M812 496v256" stroke="#d00" stroke-width="6"/></g>
    <path d="M210 768h116M436 768h140M630 740h32v30h-32M640 780V740M700 760h60" stroke="#a00" stroke-width="5"/>
    <path d="M1296 60v150M1284 754v22h40M205 264h40" stroke="#333" stroke-width="4"/>
    <g><use href="#b" x="385" y="118" fill="none"/><use href="#b" x="416" y="186"/><use href="#bo" x="790" y="173"/><use href="#bo" x="399" y="323"/><use href="#b" x="671" y="345"/><use href="#bo" x="1080" y="365"/><use href="#b" x="1420" y="124"/><use href="#b" x="101" y="652"/><use href="#b" x="1383" y="704"/><use href="#b" x="297" y="876"/><use href="#b" x="491" y="878"/><use href="#b" x="639" y="876"/></g>
    <g stroke="#222" marker-end="url(#a)"><path d="M385 142L328 224"/><path d="M452 186L510 112"/><path d="M756 174L690 174"/><path d="M743 -5L652 125"/><path d="M1130 152L1246 57"/><path d="M1385 124H1308"/><path d="M1046 366H992"/><path d="M1114 366H1194"/><path d="M136 652H200"/><path d="M1350 704L1272 630"/><path d="M297 852V780"/><path d="M527 876L560 784"/><path d="M439 324L565 341 680 268"/></g><path d="M362 314L256 276M640 852V770"/>
    <g class="lato num" font-size="38"><text x="387" y="131">31</text><text x="412" y="199">39</text><text x="786" y="188">35</text><text x="399" y="337">34</text><text x="671" y="359">40</text><text x="1078" y="380">20</text><text x="1414" y="138">14</text><text x="101" y="667">15</text><text x="1380" y="718">37</text><text x="297" y="891">32</text><text x="491" y="892">12</text><text x="638" y="891">30</text></g>
    <g class="lato num lft" font-size="36"><text x="950" y="138" textLength="164">START OF</text><text x="950" y="185" textLength="148">FULL TILE</text></g>
   </g>
   </g>

   <!-- enlarged electrical plan -->
   <g transform="translate(1600 230) scale(.33333)" fill="none" stroke="#555" stroke-width="3.500">
    <path d="M235 110H612v36H258V1335H235z" fill="#999" stroke="#666"/><path d="M612 146H257V1330" stroke="#000" stroke-width="7"/>
    <path d="M182 110V1195M220 140V2072H158M235 16V90M208 18h404M571 18V130M158 110h80M153 141h90M153 632h90M153 1167h90M230 334h382M208 486h62" stroke="#666"/>
    <path d="M166 127l32 30M166 618l32 30M166 1152l32 30M244 348l30-30M222 34l18-16" stroke="#111" stroke-width="6"/>
    <path d="M178 456l31 31-31 31-31-31z"/><circle cx="283" cy="572" r="13"/><circle cx="283" cy="637" r="13"/><circle cx="283" cy="1169" r="13"/><circle cx="532" cy="170" r="12"/><path d="M262 572h46M262 637h40M262 1169h46M532 150v40M264 664l14-10v20zM262 606q6-10 10 0t10 0 10 0 10 0M560 164l12-16 8 16zM612 160q-10 10 0 20M420 632L612 692"/>
    <g stroke="#222" marker-end="url(#a)"><path d="M378 573H300"/><path d="M378 622L300 607"/><path d="M378 672L298 637"/><path d="M378 722L280 668"/><path d="M378 1114L298 1168"/><path d="M500 266L530 184"/><path d="M551 266L570 172"/></g><path d="M600 266l10-60"/>
    <use href="#q" x="378" y="551"/><use href="#q" x="378" y="601"/><use href="#q" x="378" y="653"/><use href="#q" x="378" y="702"/><use href="#q" x="378" y="1093"/><use href="#q" x="479" y="266"/><use href="#q" x="528" y="266"/><path d="M612 266h-32v42h32" stroke="#333" stroke-width="4"/>
    <g class="lato num" font-size="38"><text x="401" y="586">1</text><text x="401" y="636">7</text><text x="401" y="688">11</text><text x="401" y="738">5</text><text x="401" y="1128">1</text><text x="501" y="302">1</text><text x="550" y="302">5</text><text x="597" y="302" textLength="28">11</text><text transform="translate(163 388) rotate(-90)" textLength="92" lengthAdjust="spacingAndGlyphs">6'-10"</text><text transform="translate(163 902) rotate(-90)" textLength="72" lengthAdjust="spacingAndGlyphs">7'-5"</text><text x="178" y="496" font-size="24">C</text></g>
   </g>
   <g transform="translate(1600 620) scale(.33333)" fill="none" stroke="#444" stroke-width="3.500">
    <path d="M235 157H612v28H316V390H257V900H612v38H235V364h57V183H235z" fill="#999" stroke="#444" stroke-width="4"/><path d="M612 185H316V388M257 390V900H612M235 938H612" stroke="#111" stroke-width="6"/>
    <path d="M612 113H210Q112 118 111 220V925Q112 1020 210 1025H612" stroke="#000" stroke-width="13" stroke-dasharray="37 17"/>
    <path d="M76 132V964M46 160H235M46 386H235M46 936H235" stroke="#333"/><path d="M60 146l30 28M60 372l30 28M60 922l30 28" stroke="#111" stroke-width="6"/><path d="M235 955v134" stroke="#888" stroke-width="6"/>
    <path d="M380 187q4 20 24 20h208M612 210H362q-22 4-22 24v82q2 24 24 26H612M316 372q150 20 296-6M430 382q110 0 182-14"/><path d="M528 192h84v164h-84zM540 192v164M552 192v164M564 192v164M576 192v164M588 192v164M600 192v164" stroke="#222" stroke-width="5"/><circle cx="370" cy="277" r="10"/><path d="M318 277h24v-10h6v20h-6v-10M320 300v46" stroke-width="5"/><path d="M322 344l14 28M342 348l-6 26M352 352l12 26M374 354l-6 26M382 356l14 28M404 360l-6 26M410 364l14 26M428 366v24M324 346l106 18M322 368l108 22" stroke="#222"/>
    <path d="M262 552h126v324H262zM284 590h80v102h-80zM298 604h52v74h-52zM291 597h66v88h-66zM268 898v-8h100v8M550 898q0-18 12-18h50"/><circle cx="323" cy="642" r="5"/><circle cx="279" cy="551" r="13"/><circle cx="279" cy="815" r="13"/><path d="M262 700q180-80 284 0M546 508q-90 90 0 192M546 700q30-10 66-22M546 482v52M520 508h52M546 674v52M520 700h52" stroke="#777"/><circle cx="546" cy="508" r="12" fill="#fff"/><circle cx="546" cy="700" r="12" fill="#fff"/>
    <g stroke="#222" marker-end="url(#a)"><path d="M404 514L300 550"/><path d="M404 740L298 808"/></g>
    <use href="#q" x="403" y="491"/><use href="#q" x="403" y="717"/><path d="M612 717h-42v42h42" stroke="#333" stroke-width="4"/>
    <g class="lato num" font-size="38"><text x="425" y="526">2</text><text x="425" y="752">2</text><text x="591" y="752" textLength="38">14</text><text x="293" y="588" font-size="26">GFI</text><text x="293" y="851" font-size="26">GFI</text></g>
    <g class="lato num lft" font-size="38"><text x="495" y="1080" textLength="84">8'-10</text><text x="584" y="1062" font-size="32">1</text><text x="582" y="1092" font-size="30">2</text><text x="596" y="1074">"</text><text transform="translate(36 322) rotate(-90)" textLength="60">3'-1</text><text transform="translate(24 258) rotate(-90)" font-size="32">1</text><text transform="translate(52 260) rotate(-90)" font-size="32">2</text><text transform="translate(36 240) rotate(-90)">"</text><text transform="translate(36 708) rotate(-90)" textLength="60">7'-7</text><text transform="translate(24 644) rotate(-90)" font-size="32">3</text><text transform="translate(52 645) rotate(-90)" font-size="32">4</text><text transform="translate(36 628) rotate(-90)">"</text></g><path d="M27 232v30M27 622v28M580 1064h22" stroke="#333"/>
   </g>
  </svg>
  <div class="vscroll"><svg width="24" height="28" viewBox="0 0 24 28"><path d="M6 17l6-6 6 6" fill="none" stroke="#555" stroke-width="3"/></svg><i></i><svg width="24" height="28" viewBox="0 0 24 28"><path d="M6 11l6 6 6-6" fill="none" stroke="#555" stroke-width="3"/></svg></div>
  <div class="hscroll big"><svg width="26" height="24" viewBox="0 0 26 24"><path d="M16 6l-6 5.500 6 5.500" fill="none" stroke="#555" stroke-width="2.800"/></svg><i></i><svg width="26" height="24" viewBox="0 0 26 24"><path d="M10 6l6 5.500-6 5.500" fill="none" stroke="#555" stroke-width="2.800"/></svg></div>
 </section>

 <aside class="rail">
  <div class="col">
   <div class="vgroup a1"><i class="hgrip"></i>
    <svg class="k9" width="41" height="37" viewBox="1831 246 41 37"><g><path d="M742 74h40l-22 26 22 28h-58V98z" fill="none" stroke="#999"/><path d="M736 68h12v12h-12zM776 68h12v12h-12zM754 95h12v12h-12zM776 122h12v12h-12zM718 122h12v12h-12zM718 92h12v12h-12z" fill="#888"/></g></svg>
    <svg class="k9" width="41" height="37" viewBox="1831 283 41 37"><g fill="none" stroke="#888"><path d="M719 183h69v62h-69z" stroke-width="2"/><path d="M719 196l13-13M719 212l29-29M719 228l45-45M719 244l61-61M733 245l55-55M749 245l39-39M765 245l23-23M781 245l7-7"/><path d="M738 200h31v28h-31z" fill="#f0f0f0" stroke-width="2"/></g></svg>
    <svg class="k9" width="41" height="38" viewBox="1831 320 41 38"><g fill="none" stroke="#888" stroke-width="1.500"><path d="M719 300h69v54h-69zM719 318h69M719 336h69M742 300v54M765 300v54"/></g></svg>
    <svg class="k9" width="41" height="41" viewBox="1831 358 41 41"><g fill="#dedede" stroke="#c4c4c4"><path d="M737 432v-20h46v44h-10" fill="none" stroke="#aaa" stroke-dasharray="3 2"/><path d="M724 444q-4-16 12-14 6-14 16 0 14-6 14 8l14 18-10 12-10-18-12 18-12-16q-10 6-12-8z"/></g></svg>
   </div>
   <div class="vgroup a2"><i class="hgrip"></i>
    <svg class="k9" width="41" height="37" viewBox="1831 410 41 37"><g fill="#bbb" stroke="#888"><path d="M740 572v48h-22z"/><path d="M752 602l36 18h-36z" fill="none"/><path d="M762 574q18-4 20 14M770 566l-12 8 10 10" fill="none" stroke-width="1.500"/></g></svg>
    <svg class="k9" width="41" height="37" viewBox="1831 447 41 37"><g fill="#bbb" stroke="#888"><path d="M766 686v46h22z"/><path d="M756 712v20h-38z" fill="none"/><path d="M724 702q0-18 20-16M736 678l14 8-10 12" fill="none" stroke-width="1.500"/></g></svg>
    <svg class="k9" width="41" height="38" viewBox="1831 484 41 38"><g fill="#bbb" stroke="#888" stroke-width="1.300"><path d="M744 798v48h-22z" fill="none"/><path d="M760 798v48h24z"/></g></svg>
    <svg class="k9" width="41" height="40" viewBox="1831 522 41 40"><g fill="#bbb" stroke="#888" stroke-width="1.300"><path d="M778 902v24h-46z" fill="none"/><path d="M778 962v-23h-46z"/></g></svg>
   </div>
   <div class="vgroup a3"><i class="hgrip"></i>
    <svg class="k9" width="41" height="40" viewBox="1831 574 41 40"><g><path d="M737 1065h20l12 12v24h-32zM757 1065v12h12" fill="#f8f8f8" stroke="#bbb"/><text x="721" y="1125" font-size="25" font-weight="700" fill="#888" textLength="60">TIFF</text></g></svg>
    <svg class="k0" width="41" height="37" viewBox="1831 614 41 37"><g fill="#eee" stroke="#999"><path d="M742 8h24l12 12v28h-36z"/><path d="M724 38h12l8 8h20v20h-40z" stroke="#bbb"/><path d="M740 10q-16-2-14 18M719 20l7 10 9-9" fill="none" stroke-width="1.500"/></g></svg>
    <svg class="k0" width="41" height="37" viewBox="1831 651 41 37"><g fill="#eee" stroke="#999"><path d="M728 120h14v42h-24v-30z"/><path d="M734 150h14l8 8h18v16h-40z" stroke="#bbb"/><path d="M742 120h12v22M756 120q14 2 12 18M760 132l8 8 8-8" fill="none" stroke-width="1.500"/></g></svg>
    <svg class="k0" width="41" height="37" viewBox="1831 688 41 37"><g fill="#eee" stroke="#999"><path d="M728 238h14v38h-24v-28z"/><path d="M742 234h22l14 12v28h-36z" fill="#fafafa" stroke="#ccc"/></g></svg>
    <svg class="k0" width="41" height="38" viewBox="1831 725 41 38"><g fill="#eee" stroke="#999"><path d="M742 344h32v40h-40v-30z"/><path d="M720 368h38v20l-12 12h-26z" stroke="#bbb"/></g></svg>
    <svg class="k0" width="41" height="40" viewBox="1831 763 41 40"><g fill="none" stroke="#999"><path d="M738 468v38h40M728 478h40v38" stroke-width="2.500"/><path d="M748 458q-20-4-24 12M722 460v12h12M760 514q16 4 22-10M784 500v14h-12"/></g></svg>
   </div>
  </div>
  <div class="col">
   <div class="vgroup b1"><i class="hgrip"></i>
    <svg class="k9" width="41" height="37" viewBox="1873 246 41 37"><g fill="none" stroke="#888"><path d="M850 86h50v52h-50z" stroke-width="3.500"/><path d="M862 70h56v54h-14" stroke-width="2"/><path d="M874 100v26M861 113h26" stroke-width="3"/></g></svg>
    <svg class="k9" width="41" height="37" viewBox="1873 283 41 37"><g fill="#888"><path d="M849 182h24l-8 7 12 12-6 6-13-12-9 9zM918 182h-24l8 7-12 12 6 6 13-12 9 9zM849 250h24l-8-7 12-12-6-6-13 12-9-9zM918 250h-24l8-7-12-12 6-6 13 12 9-9z"/></g></svg>
    <svg class="k9" width="41" height="38" viewBox="1873 320 41 38"><g fill="#f0f0f0" stroke="#888" stroke-width="1.500"><path d="M854 299h38v37h-38zM876 322h38v36h-38z" fill="none"/><path d="M849 294h9v9h-9zM887 294h9v9h-9zM849 331h9v9h-9zM871 317h9v9h-9zM909 317h9v9h-9zM871 354h9v9h-9zM909 354h9v9h-9z"/></g></svg>
    <svg class="k9" width="41" height="38" viewBox="1873 358 41 38"><g fill="none" stroke="#888"><path d="M851 414h66v24h-66z" stroke-width="3"/><path d="M851 450v22M917 450v22" stroke-width="2"/><path d="M858 461h52M866 455l-8 6 8 6M902 455l8 6-8 6" stroke-width="1.800"/></g></svg>
    <svg class="k9" width="41" height="38" viewBox="1873 396 41 38"><g fill="none" stroke="#888"><path d="M850 536h50v50h-50z" stroke-width="3.500"/><path d="M862 520h56v54h-14" stroke-width="2"/><path d="M863 562h24" stroke-width="3"/></g></svg>
    <svg class="k9" width="41" height="39" viewBox="1873 434 41 39"><g fill="#f0f0f0" stroke="#888" stroke-width="1.500"><path d="M854 638h36v34h-36z" fill="#999"/><path d="M876 662h38v36h-38z" fill="#fafafa"/><path d="M849 633h9v9h-9zM887 633h9v9h-9zM849 667h9v9h-9zM909 655h9v9h-9zM871 692h9v9h-9zM909 692h9v9h-9z"/></g></svg>
   </div>
   <div class="vgroup b2"><i class="hgrip"></i>
    <svg class="k9 sel" width="41" height="37" viewBox="1873 486 41 37"><g><path d="M854 792h70v70h-70z" fill="#e9eef2"/><path d="M856 803h11M856 826h11M856 849h11" stroke="#333" stroke-width="5"/><path d="M870 803h22M896 803h24M870 826h22M896 826h24M870 849h22M896 849h24" stroke="#999" stroke-width="4.500"/></g></svg>
    <svg class="k9 sel" width="41" height="37" viewBox="1873 523 41 37"><g fill="#fff" stroke="#333"><path d="M854 905h70v70h-70z" fill="#f4f4f4" stroke="none"/><path d="M862 907h60v40h-60z" stroke-width="2"/><path d="M870 916h10M884 916h22M896 926h12" stroke-dasharray="3 1.500"/><circle cx="870" cy="941" r="16" stroke-width="1.500"/><path d="M882 952l18 15" stroke="#3333d0" stroke-width="3"/><path d="M862 936h6M872 934h8M864 944h10"/></g></svg>
    <svg class="k9" width="41" height="37" viewBox="1873 560 41 37"><g fill="#e8e8e8" stroke="#333" stroke-width="1.800"><path d="M849 1015h49v44h-49zM858 1024h50v45h-50zM868 1034h50v45h-50z"/><path d="M878 1044h30v24h-30z" fill="#fff"/></g></svg>
    <svg class="k9" width="41" height="43" viewBox="1873 597 41 43"><g><path d="M849 1128h64v63h-64z" fill="#fff" stroke="#4040e8" stroke-width="1.800"/><path d="M849 1132h64" stroke="#4040e8" stroke-width="3"/><path d="M853 1132h18" stroke="#fff" stroke-width="1.500"/><path d="M906 1132h5" stroke="#f33" stroke-width="2"/><text x="867" y="1179" font-size="46" font-weight="700" fill="#222">2</text></g></svg>
    <i class="hsep"></i>
    <svg class="k0" width="41" height="48" viewBox="1873 643 41 48"><g><path d="M850 107h68v62h-68z" fill="#fff" stroke="#222" stroke-width="1.800"/><path d="M861 114h13v12h-13z" fill="#4444f0"/><path d="M861 132h13v12h-13z" fill="#a83232"/><path d="M861 150h13v12h-13z" fill="#2f9a2f"/><path d="M879 121h28M879 139h28M879 156h28" stroke="#444" stroke-width="1.300"/></g></svg>
    <i class="hsep"></i>
   </div>
  </div>
 </aside>
</main>

<footer class="taskbar">
 <svg class="k4" width="73" height="60" viewBox="0 1020 73 60"><g fill="#fff"><path d="M39 95l17-4v28H39zM58 90l20-5v34H58zM39 122h17v27l-17-4zM58 122h20v34l-20-6z"/></g></svg>
 <div class="search"><svg width="57" height="55" viewBox="75 1022 57 55"><circle cx="105.500" cy="1046" r="8" fill="none" stroke="#222" stroke-width="1.700"/><path d="M100 1052l-9.500 9.500" stroke="#222" stroke-width="1.700"/></svg><span class="fit" data-w="198">Type here to search</span></div>
 <svg class="k4" width="144" height="60" viewBox="587 1020 144 60"><g fill="none" stroke="#fff"><ellipse cx="1019" cy="120" rx="16.500" ry="31" stroke-width="3"/><path d="M1117 84v11h24V84M1117 104h24v31h-24zM1117 152v-11h24v11M1154 84v14M1154 114v38" stroke-width="1.500"/><path d="M1151 105h6v8h-6z" fill="#fff" stroke="none"/></g></svg>
 <svg width="70" height="60" viewBox="731 1020 70 60"><path d="M751.500 1047q4-13 15-13 15 1 14.500 19h-21q1 8 11 8 5 0 8-2v6q-5 2-11 2-14-1-14.500-14 0-7 6-10-4 1-8 4zM761 1046h10q0-6-5-6-4 0-5 6z" fill="#0f7bd9" fill-rule="evenodd"/></svg>
 <svg class="u" width="56" height="60" viewBox="801 1020 56 60"><path d="M811 1062v-25h11l3 3h17v22z" fill="#fbd467"/><path d="M811 1041v-4h13l2 4z" fill="#dd9d12"/><path d="M817 1063v-9q0-2 2-2h17q2 0 2 2v9h-5v-5h-10v5z" fill="#2f8fdc"/></svg>
 <svg width="62" height="60" viewBox="857 1020 62 60"><path d="M870 1041h35v24h-35z" fill="#fff"/><path d="M881 1042q-1-9 7-9 8 0 7 9" fill="none" stroke="#ccc" stroke-width="2"/><path d="M880 1046h7v7h-7z" fill="#f25022"/><path d="M888 1046h7v7h-7z" fill="#7fba00"/><path d="M880 1054h7v7h-7z" fill="#00a4ef"/><path d="M888 1054h7v7h-7z" fill="#ffb900"/></svg>
 <svg width="61" height="60" viewBox="919 1020 61 60"><path d="M931 1043l18-10 18 10v22h-36z" fill="#1263b5"/><path d="M935 1043h30l-15 12z" fill="#f2f2f2"/><path d="M931 1043l18 12 18-12v22h-36z" fill="#2fa9ec"/></svg>
 <svg class="u" width="60" height="60" viewBox="980 1020 60 60"><circle cx="1010" cy="1050" r="16.500" fill="#fbc116"/><path d="M1010 1050L995.500 1042a16.500 16.500 0 0 1 29 0z" fill="#db4437"/><path d="M1010 1050L995.500 1042a16.500 16.500 0 0 0 12 24.300l6-12z" fill="#109d58"/><circle cx="1010" cy="1050" r="8" fill="#fff"/><circle cx="1010" cy="1050" r="6.200" fill="#4285f4"/></svg>
 <svg class="u" width="61" height="60" viewBox="1040 1020 61 60"><path d="M1061 1034h27v32h-27z" fill="#21a366"/><path d="M1074 1034h14v8h-14z" fill="#33c481"/><path d="M1061 1050h27v16h-27z" fill="#185c37"/><path d="M1061 1042h13v8h-13z" fill="#107c41"/><path d="M1053 1041h18v18h-18z" fill="#107c41"/><text x="1057" y="1056" font-size="15" font-weight="700" fill="#fff">X</text></svg>
 <svg width="61" height="60" viewBox="1101 1020 61 60"><path d="M1116.500 1040h31v20h-31z" fill="#a8dcf5" stroke="#4ba3d6" stroke-width="2"/><circle cx="1125" cy="1049" r="5" fill="#2e7fbf"/><path d="M1125 1049v-6a6 6 0 0 1 6 6z" fill="#f7a534"/><path d="M1134 1044h10M1134 1049h10M1121 1057h8M1134 1054v5M1140 1052v6" stroke="#2478b8" stroke-width="2"/></svg>
 <svg width="62" height="60" viewBox="1162 1020 62 60"><rect x="1176" y="1033" width="33" height="34" rx="7" fill="#f98b0e"/><path d="M1183 1063q-4-3 1-5-6-5 0-11-7-9 2-11 8-1 8 6-1 3-4 3 0 4 4 4 2-4 6-3l-1-4q8 3 5 9 3 4 0 8 0 4-6 4z" fill="#fff"/><circle cx="1195" cy="1057" r="4" fill="none" stroke="#f98b0e" stroke-width="1.500"/></svg>
 <svg width="61" height="60" viewBox="1224 1020 61 60"><path d="M1237 1033h33v31h-33z" fill="#f3f3f3"/><path d="M1244 1057q10-6 11-19 2 12 12 15-12-2-23 4z" fill="none" stroke="#d0202a" stroke-width="2"/></svg>
 <svg width="61" height="60" viewBox="1285 1020 61 60"><path d="M1297 1032h36v36h-36z" fill="#f9453b"/><path d="M1311 1043l7 7-7 7-7-7z" fill="#fff"/><path d="M1317 1043l7 7-7 7" fill="none" stroke="#fff" stroke-width="2.600"/></svg>
 <svg width="61" height="60" viewBox="1346 1020 61 60"><rect x="1359" y="1033" width="34" height="34" rx="10" fill="#4a8cf7"/><rect x="1365" y="1044" width="15" height="12" rx="3" fill="#fff"/><path d="M1381 1049l6-5v12l-6-5z" fill="#fff"/></svg>
 <svg width="60" height="60" viewBox="1407 1020 60 60"><path d="M1421 1054q0-15 14-17 15-1 17 9 0 6-7 6-3 2 0 8 0 6-9 4-13-1-15-10z" fill="#b9dcf0"/><circle cx="1426" cy="1051" r="3" fill="#e04a3c"/><circle cx="1431" cy="1043" r="3" fill="#57b847"/><circle cx="1439" cy="1041" r="3" fill="#f3c02c"/><circle cx="1429" cy="1059" r="3" fill="#3478c8"/><path d="M1442 1062l6-24" stroke="#e08a30" stroke-width="3"/><path d="M1447 1040l5-8 1 10z" fill="#dcb98b"/></svg>
 <svg width="62" height="60" viewBox="1467 1020 62 60"><ellipse cx="1498" cy="1042" rx="13" ry="8" transform="rotate(-18 1498 1042)" fill="#fafafa" stroke="#d6323a" stroke-width="2.500"/><path d="M1482 1049q6 10 12 6" fill="none" stroke="#ccc" stroke-width="3"/><path d="M1491 1036l8 19M1508 1040l-16 15" stroke="#888" stroke-width="2"/><ellipse cx="1501" cy="1061" rx="3" ry="5" fill="none" stroke="#1f7fd0" stroke-width="2.500"/><ellipse cx="1508" cy="1055" rx="5" ry="3" fill="none" stroke="#1f7fd0" stroke-width="2.500"/></svg>
 <svg class="u lit" width="58" height="60" viewBox="1529 1020 58 60"><circle cx="1557.500" cy="1050" r="16.500" fill="#e8f5ec"/><circle cx="1557.500" cy="1050" r="13" fill="none" stroke="#128a45" stroke-width="5"/><circle cx="1557.500" cy="1050" r="7.500" fill="none" stroke="#128a45" stroke-width="2.500"/><circle cx="1557.500" cy="1050" r="3.500" fill="#128a45"/><path d="M1557.500 1035v6M1557.500 1059v6M1543 1050h6M1566 1050h6" stroke="#e8f5ec" stroke-width="2"/></svg>
 <svg class="k6" width="148" height="60" viewBox="1587 1020 148 60"><g fill="none" stroke="#fff" stroke-width="1.400"><path d="M1048 132l14-28 14 28"/><path d="M1103 104h33v37h-33zM1139 114v14"/><path d="M1107 109h15v27h-15z" fill="#fff" stroke="none"/><path d="M1196 146c-2 6-8 10-16 10-26 0-26-71 0-71 15 0 20 16 18 34M1180 85c-14 14-14 54 0 71M1180 85c8 8 10 20 10 34M1164 107h32M1161 132h22"/><ellipse cx="1189" cy="140" rx="9" ry="14"/><path d="M1183 130l13 20M1220 112v18h6l8 12V98l-8 14zM1239 112q5 8 0 18M1245 103q9 17 0 36M1251 97q11 23 0 47"/></g></svg>
 <div class="clock"><span class="fit" data-w="67">7:49 AM</span><span class="fit" data-w="73">5/3/2020</span></div>
 <svg class="note" width="66" height="60" viewBox="1838 1020 66 60"><path d="M1858 1038h24v19h-15l-5 5v-5h-4z" fill="#fff"/><path d="M1863 1043h14M1863 1047h14M1863 1052h10" stroke="#1c1c1c" stroke-width="1.300"/><circle cx="1881" cy="1062" r="12" fill="#333" stroke="#aaa"/><text x="1876.500" y="1068" font-size="17" font-weight="700" fill="#fff">5</text></svg>
</footer>
</div>
<script src="fit.js"></script>
</body>
</html>
```
FILE: styles.css
```css
*{box-sizing:border-box}
html,body{margin:0;background:#fff}
body{width:1920px;height:1080px;overflow:hidden;font-family:"Noto Sans","Open Sans",sans-serif;font-size:17.5px;color:#1a1a1a}
svg{display:block;flex:none}
.app{height:1080px;display:flex;flex-direction:column}
.fit{display:inline-block;white-space:nowrap;transform-origin:0 50%;flex:none;font-style:normal;font-weight:inherit}
.k1>g{transform:scale(.408163,.333333)}
.k2>g{transform:translate(640px,60px) scale(.408163,.333333)}
.k3>g{transform:translate(1240px,130px) scale(.433673,.333333)}
.k4>g{transform:translate(0,1010px) scale(.61233,.333333)}
.k6>g{transform:translate(960px,1010px) scale(.61233,.333333)}
.k9>g{transform:translate(1600px,230px) scale(.333333)}
.k0>g{transform:translate(1600px,620px) scale(.333333)}
.k1 *,.k2 *,.k3 *,.k4 *,.k6 *,.k9 *,.k0 *{vector-effect:non-scaling-stroke}
.srf{font-family:"Liberation Serif",serif;font-weight:700;fill:#333}
.arial{font-family:"Liberation Sans",sans-serif;fill:#111}
.lato{font-family:Lato,sans-serif}
.num{fill:#222;stroke:none;text-anchor:middle;font-weight:500}
.lft{text-anchor:start}

.title{height:36px;flex:none;display:flex;align-items:center;color:#000;padding-bottom:1px}
.ttl{margin-left:1px}
.winbtns{margin-left:auto;margin-right:14px}
.band{display:flex;align-items:center;background:#f0f0f0;border-right:2px solid #a8a8a8;flex:none;height:100%}
.grip{width:8px;height:34px;flex:none;background:radial-gradient(circle,#b4b4b4 1.3px,transparent 1.7px) 50% 0/8px 6px}
.sep{width:2px;height:32px;background:#aaa;flex:none}
.menurow{height:42px;flex:none;border-top:1px solid #aaa;display:flex}
.menus{width:777px;gap:33.300px;border-bottom:1px solid #bbb}
.menus .grip{margin-right:-15.5px}
.menus u{text-decoration-thickness:1px;text-underline-offset:3px}
.filerow{height:40px;flex:none;display:flex;border-bottom:1px solid #aaa}
.filerow .band{width:1135px;border-top:2px solid #b0b0b0}
.send{margin:0 1px}
.bidview{margin-left:11px;margin-right:6px}
.combo{height:34px;background:#e1e1e1;border:1px solid #a5a5a5;display:flex;align-items:center;flex:none;padding:0 3px 0 5px;overflow:hidden}
.combo.white{background:#fff;border:2px solid #7c7c7c}
.combo.off{background:#ccc;border-color:#bbb;color:#7b7b7b}
.chev{width:9px;height:9px;margin-left:auto;margin-right:5px;margin-top:-5px;border-right:2px solid #666;border-bottom:2px solid #666;transform:rotate(45deg);flex:none}
.off .chev{border-color:#aaa}
.w-bid{width:300px;padding-left:3px}
.w-bid .fit{padding-top:2px}
.w-page{width:225px}
.pagename{width:189px;overflow:hidden;flex:none;margin-top:-2px}
.w-zoom{width:90px;padding-left:5px}
.w-zoom .fit{margin-top:-3px}
.w-scale{width:134px}
.w-area{width:149px}
.w-letter{width:135px;margin-left:17px}
.w-lf{width:120px}
.w-feet{width:75px;padding-left:4px}
.row4 .combo .fit{padding-top:2px}

.tabs{height:35px;flex:none;background:#f0f0f0;display:flex;align-items:flex-end;padding:0 0 1px 3px;border-bottom:1px solid #dcdcdc;margin-right:3px;font-family:"Liberation Sans",sans-serif;font-size:17.5px;font-weight:400}
.tabs span{height:28px;border:1px solid #dadada;border-left:0;border-bottom:0;display:flex;align-items:center;justify-content:center;padding-top:2px}
.tabs .on{background:#fff;height:31px;padding-top:1px;margin-bottom:-1px}
.t1{width:73px}.t2{width:93px}.t3{width:97px}.t4{width:123px}.t5{width:172px}.t6{width:152px}

.toolrow{height:41px;flex:none;display:flex;padding-left:6px;border-right:1px solid #ddd;margin-right:3px}
.toolrow .band{border-bottom:2px solid #b0b0b0}
.row4{height:40px}
.first3{width:406px}.draw3{width:249px}.shapes3{width:724px}.zoom3{width:323px}
.draw3 .grip,.shapes3 .grip{margin-left:2px}
.zoom3 .grip{margin-left:3px}
.sel{background:#c0dcf3;outline:1px solid #90c8f6;outline-offset:-1px}
.scale4{width:385px}.mark4{width:256px}.page4{width:371px}.cond4{width:423px}
.scale4 .grip{margin:0 3px 0 3px}
.area{margin:0 5px}
.mark4 .grip,.page4 .grip,.cond4 .grip{margin-left:2px}
.check{width:19px;height:19px;border:2px solid #777;border-right-color:#ddd;border-bottom-color:#ddd;background:#f0f0f0;margin:0 6px 0 18px}
.dim{color:#bdbdbd}
.page4 .dim{color:#999}
.cond4 .grip{margin-right:3px}
.units{margin:0 4px 0 7px}

.work{height:783px;flex:none;display:flex;padding-left:6px;background:#fff;border-bottom:0;margin-right:3px;border-right:1px solid #ddd}
.dock{width:402px;height:776px;background:#f0f0f0;border:1px solid #999;border-width:1px 0 2px 2px;display:flex;flex-direction:column;padding-left:5px}
.cap{height:24px;display:flex;gap:4px;flex:none}
.cap i{width:330px;height:10px;margin:9px 1px 0 0;border:2px solid #aaa;border-width:2px 1px 2px 0;border-color:#a8a8a8}
.cap b{width:21px;height:22px;margin-top:1px;border:1px solid #fff;border-right:2px solid #888;border-bottom:2px solid #888;display:flex;align-items:center;justify-content:center}
.thumb{width:378px;height:255px;margin-top:3px;margin-left:1px;border:2px solid #888;border-top-width:3px;border-right:2px solid #ddd;border-bottom:2px solid #ddd;background:#fff;flex:none;font-family:Lato,sans-serif}
.thumb svg{margin-left:1px}
.second{margin-top:15px;border-top:2px solid #777;height:27px;margin-right:10px}
.slant{margin-top:0;margin-left:1px}
.condbox{width:374px;height:414px;background:#fff;margin:3px 0 0 4px;border-top:0;padding-top:2px}
.list{width:372px;height:358px;border:2px solid #777;border-right:1px solid #ddd;border-bottom:1px solid #ddd;display:flex;flex-direction:column;font-family:"Liberation Sans",sans-serif;font-size:17px;overflow:hidden}
.lhead{height:37px;display:flex;flex:none;color:#222}
.lhead span{border-right:1px solid #ddd;display:flex;align-items:center;justify-content:center;height:37px;flex:none}
.h1{width:90px}.h2{width:150px;gap:42px;padding-left:37px}.h3{width:90px}
.lhead .h4{width:39px;justify-content:flex-start;padding-left:27px;border-right:0;overflow:hidden}
.lrow{height:29px;display:flex;align-items:center;font-weight:700;font-size:17.5px;padding-left:38px;color:#000;flex:none}
.g1{height:30px;border-bottom:1px dotted #bbb}
.g2{background:#c8c8c8;padding-left:36px;border-bottom:1px dotted #999}
.hscroll{display:flex;background:#f0f0f0}
.hscroll i{background:#cdcdcd;flex:none}
.hscroll svg:last-child{margin-left:auto}
.small{margin-top:auto;height:23px;width:368px}
.small i{width:228px}
.cbtns{display:flex;gap:4px;margin:9px 0 0 8px}
.cbtns svg{width:37px;height:34px;background:#ccc;outline:1px solid #ddd}

.view{width:1421px;margin-left:2px;display:grid;grid-template:750px 24px/1394px 24px;align-content:start;border-top:2px solid #777;height:776px;box-shadow:-2px 0 #808080;border-right:1px solid #ddd;border-bottom:1px solid #ddd;background:#fff}
.plan{grid-area:1/1}
.vscroll{background:#f0f0f0;display:flex;flex-direction:column;grid-area:1/2}
.vscroll i{background:#cdcdcd;height:325px;margin:89px 1px 0 1px}
.vscroll svg:last-child{margin-top:auto}
.big{grid-area:2/1/3/3;width:1418px}
.big i{width:779px;height:22px}
.big svg:last-child{margin-right:24px}
.rail{width:83px;display:flex;gap:1px;height:776px;border-top:1px solid #aaa;border-bottom:2px solid #aaa}
.col{width:41px}
.vgroup{background:#f0f0f0;border-bottom:2px solid #aaa;border-right:1px solid #aaa;width:42px;overflow:hidden}
.col + .col .vgroup{border-right:0;width:41px}
.hgrip{display:block;height:8px;background:radial-gradient(circle,#b4b4b4 1.300px,transparent 1.700px) 0 50%/6px 8px repeat-x}
.a1{height:165px;padding-top:3px}
.a2{height:165px;padding-top:1px;margin-top:1px}
.a3{height:239px}
.b1{height:240px;padding-top:3px}
.b2{height:241px;padding-top:2px;margin-top:1px}
.hsep{display:block;height:2px;background:#aaa;margin:1px 3px 0 5px}

.taskbar{height:60px;flex:none;background:#1c1c1c;display:flex;margin-top:3px;box-shadow:0 -2px #e3e3e3}
.search{width:514px;background:#f1f1f1;border:2px solid #c3c3c3;border-right:0;display:flex;align-items:center;font-size:20.5px;color:#333;padding-top:2px}
.u{background:linear-gradient(#76b9ed,#76b9ed) 50% 100%/47px 3px no-repeat}
.lit{background:linear-gradient(#76b9ed,#76b9ed) 50% 100%/58px 3px no-repeat #474747}
.clock{width:105px;color:#fff;display:flex;flex-direction:column;align-items:center;justify-content:center;line-height:28px;font-size:17.5px}
.note{margin-left:-2px}
```
FILE: fit.js
```js
// Squeeze or stretch each label horizontally to the width declared for it.
for (const el of document.querySelectorAll('.fit')) {
  const target = Number(el.dataset.w);
  const natural = el.getBoundingClientRect().width;
  el.style.transform = `scaleX(${target / natural})`;
  el.style.marginRight = `calc(${getComputedStyle(el).marginRight} + ${target - natural}px)`;
}
```
